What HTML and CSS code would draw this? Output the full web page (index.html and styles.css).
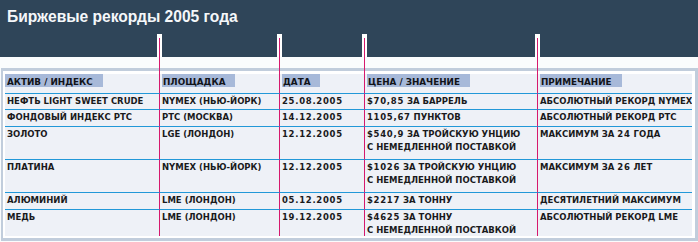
FILE: index.html
```html
<!DOCTYPE html>
<html lang="ru">
<head>
<meta charset="utf-8">
<title>Биржевые рекорды 2005 года</title>
<link rel="stylesheet" href="styles.css">
</head>
<body>
<div class="board">
  <header class="top">
    <h1 class="title">Биржевые рекорды 2005 года</h1>
  </header>
  <section class="panel">
    <div class="grid">
      <div class="cell head"><span class="label">АКТИВ / ИНДЕКС</span></div>
      <div class="cell head sep"><span class="label">ПЛОЩАДКА</span></div>
      <div class="cell head sep"><span class="label">ДАТА</span></div>
      <div class="cell head sep"><span class="label">ЦЕНА / ЗНАЧЕНИЕ</span></div>
      <div class="cell head sep"><span class="label">ПРИМЕЧАНИЕ</span></div>

      <div class="cell">НЕФТЬ LIGHT SWEET CRUDE</div>
      <div class="cell sep">NYMEX (НЬЮ-ЙОРК)</div>
      <div class="cell sep"><span class="num">25.08.2005</span></div>
      <div class="cell sep"><span class="num">$70,85</span> ЗА БАРРЕЛЬ</div>
      <div class="cell sep">АБСОЛЮТНЫЙ РЕКОРД NYMEX</div>

      <div class="cell">ФОНДОВЫЙ ИНДЕКС РТС</div>
      <div class="cell sep">РТС (МОСКВА)</div>
      <div class="cell sep"><span class="num">14.12.2005</span></div>
      <div class="cell sep"><span class="num">1105,67</span> ПУНКТОВ</div>
      <div class="cell sep">АБСОЛЮТНЫЙ РЕКОРД РТС</div>

      <div class="cell">ЗОЛОТО</div>
      <div class="cell sep">LGE (ЛОНДОН)</div>
      <div class="cell sep"><span class="num">12.12.2005</span></div>
      <div class="cell sep"><span class="num">$540,9</span> ЗА ТРОЙСКУЮ УНЦИЮ<br>С НЕМЕДЛЕННОЙ ПОСТАВКОЙ</div>
      <div class="cell sep">МАКСИМУМ ЗА <span class="num">24</span> ГОДА</div>

      <div class="cell">ПЛАТИНА</div>
      <div class="cell sep">NYMEX (НЬЮ-ЙОРК)</div>
      <div class="cell sep"><span class="num">12.12.2005</span></div>
      <div class="cell sep"><span class="num">$1026</span> ЗА ТРОЙСКУЮ УНЦИЮ<br>С НЕМЕДЛЕННОЙ ПОСТАВКОЙ</div>
      <div class="cell sep">МАКСИМУМ ЗА <span class="num">26</span> ЛЕТ</div>

      <div class="cell">АЛЮМИНИЙ</div>
      <div class="cell sep">LME (ЛОНДОН)</div>
      <div class="cell sep"><span class="num">05.12.2005</span></div>
      <div class="cell sep"><span class="num">$2217</span> ЗА ТОННУ</div>
      <div class="cell sep">ДЕСЯТИЛЕТНИЙ МАКСИМУМ</div>

      <div class="cell last">МЕДЬ</div>
      <div class="cell sep last">LME (ЛОНДОН)</div>
      <div class="cell sep last"><span class="num">19.12.2005</span></div>
      <div class="cell sep last"><span class="num">$4625</span> ЗА ТОННУ<br>С НЕМЕДЛЕННОЙ ПОСТАВКОЙ</div>
      <div class="cell sep last">АБСОЛЮТНЫЙ РЕКОРД LME</div>
    </div>
  </section>
  <div class="stub s1"></div>
  <div class="stub s2"></div>
  <div class="stub s3"></div>
  <div class="stub s4"></div>
</div>
</body>
</html>
```

FILE: styles.css
```css
html, body {
  margin: 0;
  padding: 0;
  background: #fafcfd;
}

.board {
  position: relative;
  width: 698px;
  height: 242px;
  overflow: hidden;
  font-family: "Liberation Sans", Arial, sans-serif;
}

.top {
  height: 57px;
  background: #2f4559;
  padding: 0 0 0 7px;
  box-sizing: border-box;
}

.title {
  margin: 0;
  padding-top: 8px;
  font-size: 15.6px;
  line-height: 18px;
  font-weight: bold;
  color: #f5f7f9;
}

.panel {
  margin: 11px 0 0 1px;
  border: 3px solid #c1cddc;
  border-left-width: 2px;
  padding: 3px 3px 2px 2px;
  background: #ffffff;
  width: 687px;
}

.grid {
  display: grid;
  grid-template-columns: 154px 120px 85px 173px 155px;
  grid-template-rows: 20px 16px 17px 33px 33px 17px 26px;
  background: #eef1f7;
}

.cell {
  box-sizing: border-box;
  border-bottom: 1px solid #2298d8;
  padding: 1px 0 0 2px;
  font-family: "DejaVu Sans", Verdana, sans-serif;
  font-size: 8.5px;
  line-height: 13.4px;
  font-weight: bold;
  color: #1a1a1c;
  white-space: nowrap;
  overflow: hidden;
}

.num {
  letter-spacing: 0.7px;
}

.cell.sep {
  border-left: 1px solid #d6196d;
}

.cell.last {
  border-bottom: none;
}

.cell.head {
  padding: 0;
}

.cell.head.sep {
  padding-left: 2px;
}

.label {
  display: inline-block;
  height: 13px;
  box-sizing: border-box;
  padding: 4px 10px 0 2px;
  font-size: 8.8px;
  line-height: 9px;
  background: #a7b9d9;
  color: #111318;
}

.cell.head.sep .label {
  padding-left: 1px;
}

.stub {
  position: absolute;
  top: 34px;
  width: 5px;
  height: 23px;
  background: #ffffff;
}

.stub::after {
  content: "";
  position: absolute;
  left: 2px;
  top: 4px;
  width: 1px;
  height: 36px;
  background: #d6196d;
}

.s1 { left: 157px; }
.s2 { left: 277px; }
.s3 { left: 362px; }
.s4 { left: 535px; }
```
